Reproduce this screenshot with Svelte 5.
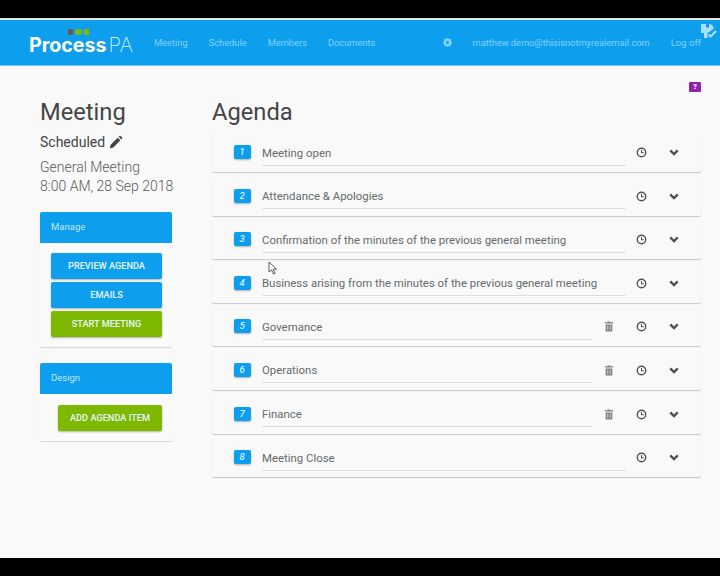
<script>
	const nav = ['Meeting', 'Schedule', 'Members', 'Documents'];

	const items = [
		{ title: 'Meeting open' },
		{ title: 'Attendance & Apologies' },
		{ title: 'Confirmation of the minutes of the previous general meeting' },
		{ title: 'Business arising from the minutes of the previous general meeting' },
		{ title: 'Governance', removable: true },
		{ title: 'Operations', removable: true },
		{ title: 'Finance', removable: true },
		{ title: 'Meeting Close' }
	];
</script>

<div class="frame">
	<header class="header">
		<div class="logo">
			<span class="dots"><i class="brown"></i><i class="green round"></i><i class="green"></i></span>
			<span class="word"><b>Process</b><span>PA</span></span>
		</div>
		<nav>
			{#each nav as link}
				<a href="#top">{link}</a>
			{/each}
		</nav>
		<div class="account">
			<svg class="gear" viewBox="0 0 24 24" width="9" height="9">
				<circle cx="12" cy="12" r="7" fill="none" stroke="#83d2fb" stroke-width="6" />
				<path d="M12 0v5M12 19v5M0 12h5M19 12h5M3.500 3.500l3.500 3.500M17 17l3.500 3.500M3.500 20.500L7 17M17 7l3.500-3.500" stroke="#83d2fb" stroke-width="4" />
			</svg>
			<a class="email" href="#top">matthew.demo@thisisnotmyrealemail.com</a>
			<a class="logoff" href="#top">Log off</a>
		</div>
		<svg class="saved" viewBox="0 0 17 15" width="17" height="15">
			<path d="M0 0h5v3.500h3V0h1.500l3 2.500V5L6.500 9v5H3V9H0z" fill="#a6e0fd" />
			<path d="M7.500 10.500l2 2 5.500-5.500" fill="none" stroke="#a6e0fd" stroke-width="2" />
		</svg>
	</header>

	<main class="content">
		<aside class="side">
			<h1>Meeting</h1>
			<div class="status">
				Scheduled
				<svg viewBox="0 0 24 24" width="15" height="15">
					<path d="M3 21l1.200-5.500L15.500 4.200l4.300 4.300L8.500 19.800zM17 2.700l1.300-1.200a1.500 1.500 0 0 1 2 0l2.200 2.200a1.500 1.500 0 0 1 0 2L21.300 7z" fill="#444" />
				</svg>
			</div>
			<p class="info">General Meeting<br />8:00 AM, 28 Sep 2018</p>

			<section class="panel">
				<div class="panel-head">Manage</div>
				<div class="panel-body">
					<button class="btn blue">PREVIEW AGENDA</button>
					<button class="btn blue">EMAILS</button>
					<button class="btn green">START MEETING</button>
				</div>
			</section>

			<section class="panel">
				<div class="panel-head">Design</div>
				<div class="panel-body">
					<button class="btn green add">ADD AGENDA ITEM</button>
				</div>
			</section>
		</aside>

		<section class="agenda">
			<div class="help">?</div>
			<h1>Agenda</h1>
			<div class="rows">
				{#each items as item, i}
					<div class="row">
						<span class="num">{i + 1}</span>
						<span class="title" class:short={item.removable}>{item.title}</span>
						{#if item.removable}
							<svg class="icon trash" viewBox="0 0 12 12" width="10" height="11">
								<path d="M4.500 0h3l.5 1h3v1.500H1V1h3zM2 3.500h8V12H2z" fill="#7d8184" />
								<path d="M4.500 5v5.500M7.500 5v5.500" stroke="#f9f9f9" stroke-width="0.800" />
							</svg>
						{/if}
						<svg class="icon clock" viewBox="0 0 12 12" width="11" height="11">
							<circle cx="6" cy="6" r="4.600" fill="none" stroke="#4d5154" stroke-width="1.500" />
							<path d="M6 3.200V6.300H8.500" fill="none" stroke="#4d5154" stroke-width="1.100" />
						</svg>
						<svg class="icon chevron" viewBox="0 0 12 8" width="10" height="7">
							<path d="M1.500 1.500L6 6l4.500-4.500" fill="none" stroke="#4d5154" stroke-width="2.800" />
						</svg>
					</div>
				{/each}
			</div>
		</section>
	</main>

	<svg class="cursor" viewBox="0 0 10 14" width="10" height="14">
		<path d="M1 1v10l2.500-2.200L5.500 13l1.600-.7-2-4.200H8.500z" fill="#fff" stroke="#333" stroke-width="0.800" />
	</svg>
</div>

<style>
	:global(body) {
		margin: 0;
		font-family: Roboto, 'Liberation Sans', sans-serif;
	}

	.frame {
		position: relative;
		width: 720px;
		height: 576px;
		box-sizing: border-box;
		background: #000;
		padding: 18px 0;
		display: flex;
		flex-direction: column;
		overflow: hidden;
	}

	.header {
		position: relative;
		flex: none;
		display: flex;
		align-items: center;
		height: 48px;
		box-sizing: border-box;
		padding-left: 29px;
		border-top: 2px solid #e4e6e7;
		border-bottom: 1px solid #72c8f5;
		background: #0d9eee;
	}

	.logo {
		width: 125px;
		display: flex;
		flex-direction: column;
	}

	.dots {
		display: flex;
		align-items: center;
		gap: 2px;
		margin: 0 0 -2px 39px;
		height: 6px;
	}

	.dots i {
		width: 5px;
		height: 6px;
	}

	.dots .brown {
		background: #6d5a4c;
	}

	.dots .green {
		background: #7fba00;
	}

	.dots .round {
		width: 7px;
		border-radius: 50%;
	}

	.word {
		font-family: Inter, sans-serif;
		font-size: 19.600px;
		line-height: 23px;
		color: #fff;
		white-space: nowrap;
	}

	.word b {
		font-weight: 700;
	}

	.word span {
		font-size: 20.500px;
		font-weight: 200;
		margin-left: 2px;
		color: #d4effd;
	}

	nav {
		display: flex;
		gap: 21px;
	}

	nav a,
	.account a {
		font-size: 9.300px;
		color: #83d2fb;
		text-decoration: none;
	}

	.account {
		margin-left: auto;
		margin-right: 19px;
		display: flex;
		align-items: center;
	}

	.gear {
		margin-right: 21px;
	}

	.account .logoff {
		margin-left: 21px;
		font-size: 9.500px;
	}

	.saved {
		position: absolute;
		right: 2px;
		top: 4px;
	}

	.content {
		flex: 1;
		display: flex;
		gap: 40px;
		padding: 0 19px 0 40px;
		background: #f9f9f9;
	}

	h1 {
		margin: 0;
		font-size: 23.700px;
		font-weight: 400;
		line-height: 30px;
		color: #454545;
	}

	.side {
		width: 132px;
		flex: none;
		padding-top: 31px;
	}

	.status {
		display: flex;
		align-items: center;
		gap: 3px;
		margin-top: 5px;
		font-size: 14px;
		line-height: 20px;
		color: #444;
	}

	.info {
		margin: 6px 0 0;
		font-size: 14px;
		font-weight: 300;
		line-height: 19px;
		color: #5b5b5b;
		white-space: nowrap;
	}

	.panel {
		margin-top: 16px;
		border-radius: 2px;
		background: #fafafa;
		box-shadow: 0 1px 1px rgba(0, 0, 0, 0.14);
	}

	.panel-head {
		height: 31px;
		padding-left: 11px;
		font-size: 9.500px;
		line-height: 30px;
		color: #bfe8fd;
		background: #0d9eee;
		border-radius: 2px 2px 0 0;
	}

	.panel-body {
		display: flex;
		flex-direction: column;
		align-items: flex-end;
		gap: 3px;
		padding: 10px 10px 10px 11px;
	}

	.btn {
		width: 111px;
		height: 26px;
		padding: 0 0 1px;
		border: 0;
		border-radius: 2px;
		font-family: inherit;
		font-size: 9.200px;
		font-weight: 500;
		color: #e6f6ff;
		box-shadow: 0 1px 2px rgba(0, 0, 0, 0.3);
	}

	.btn.blue {
		background: #0d9eee;
	}

	.btn.green {
		background: #7fb800;
	}

	.btn.add {
		width: 104px;
		margin-top: 1px;
	}

	.agenda {
		flex: 1;
		position: relative;
		padding-top: 31px;
	}

	.help {
		position: absolute;
		top: 16px;
		right: 0;
		width: 12px;
		height: 10px;
		border-radius: 1px;
		font-size: 7px;
		font-weight: 900;
		line-height: 10px;
		text-align: center;
		color: #fff;
		background: #8e24aa;
	}

	.rows {
		display: flex;
		flex-direction: column;
		gap: 3.600px;
		margin-top: 5px;
	}

	.row {
		display: flex;
		align-items: center;
		height: 40px;
		padding-left: 21.500px;
		border-radius: 2px;
		background: #f9f9f9;
		box-shadow: 0 1px 1px rgba(0, 0, 0, 0.2);
	}

	.num {
		flex: none;
		width: 17px;
		height: 14px;
		margin-right: 11.500px;
		border-radius: 2px;
		font-size: 9.500px;
		font-style: italic;
		line-height: 14px;
		text-align: center;
		color: #fff;
		background: #0d9eee;
		box-shadow: 0 1px 2px rgba(0, 0, 0, 0.3);
	}

	.title {
		width: 364px;
		box-sizing: border-box;
		height: 27px;
		border-bottom: 1px solid #dcdfe1;
		font-size: 11.400px;
		line-height: 28px;
		color: #666a6d;
		white-space: nowrap;
	}

	.title.short {
		width: 330px;
	}

	.icon {
		flex: none;
		margin-top: 1px;
	}

	.trash {
		margin-left: 12px;
	}

	.clock {
		margin-left: 10px;
	}

	.title.short + .trash + .clock {
		margin-left: 22px;
	}

	.chevron {
		margin-left: 22px;
	}

	.cursor {
		position: absolute;
		left: 268px;
		top: 261px;
	}
</style>
